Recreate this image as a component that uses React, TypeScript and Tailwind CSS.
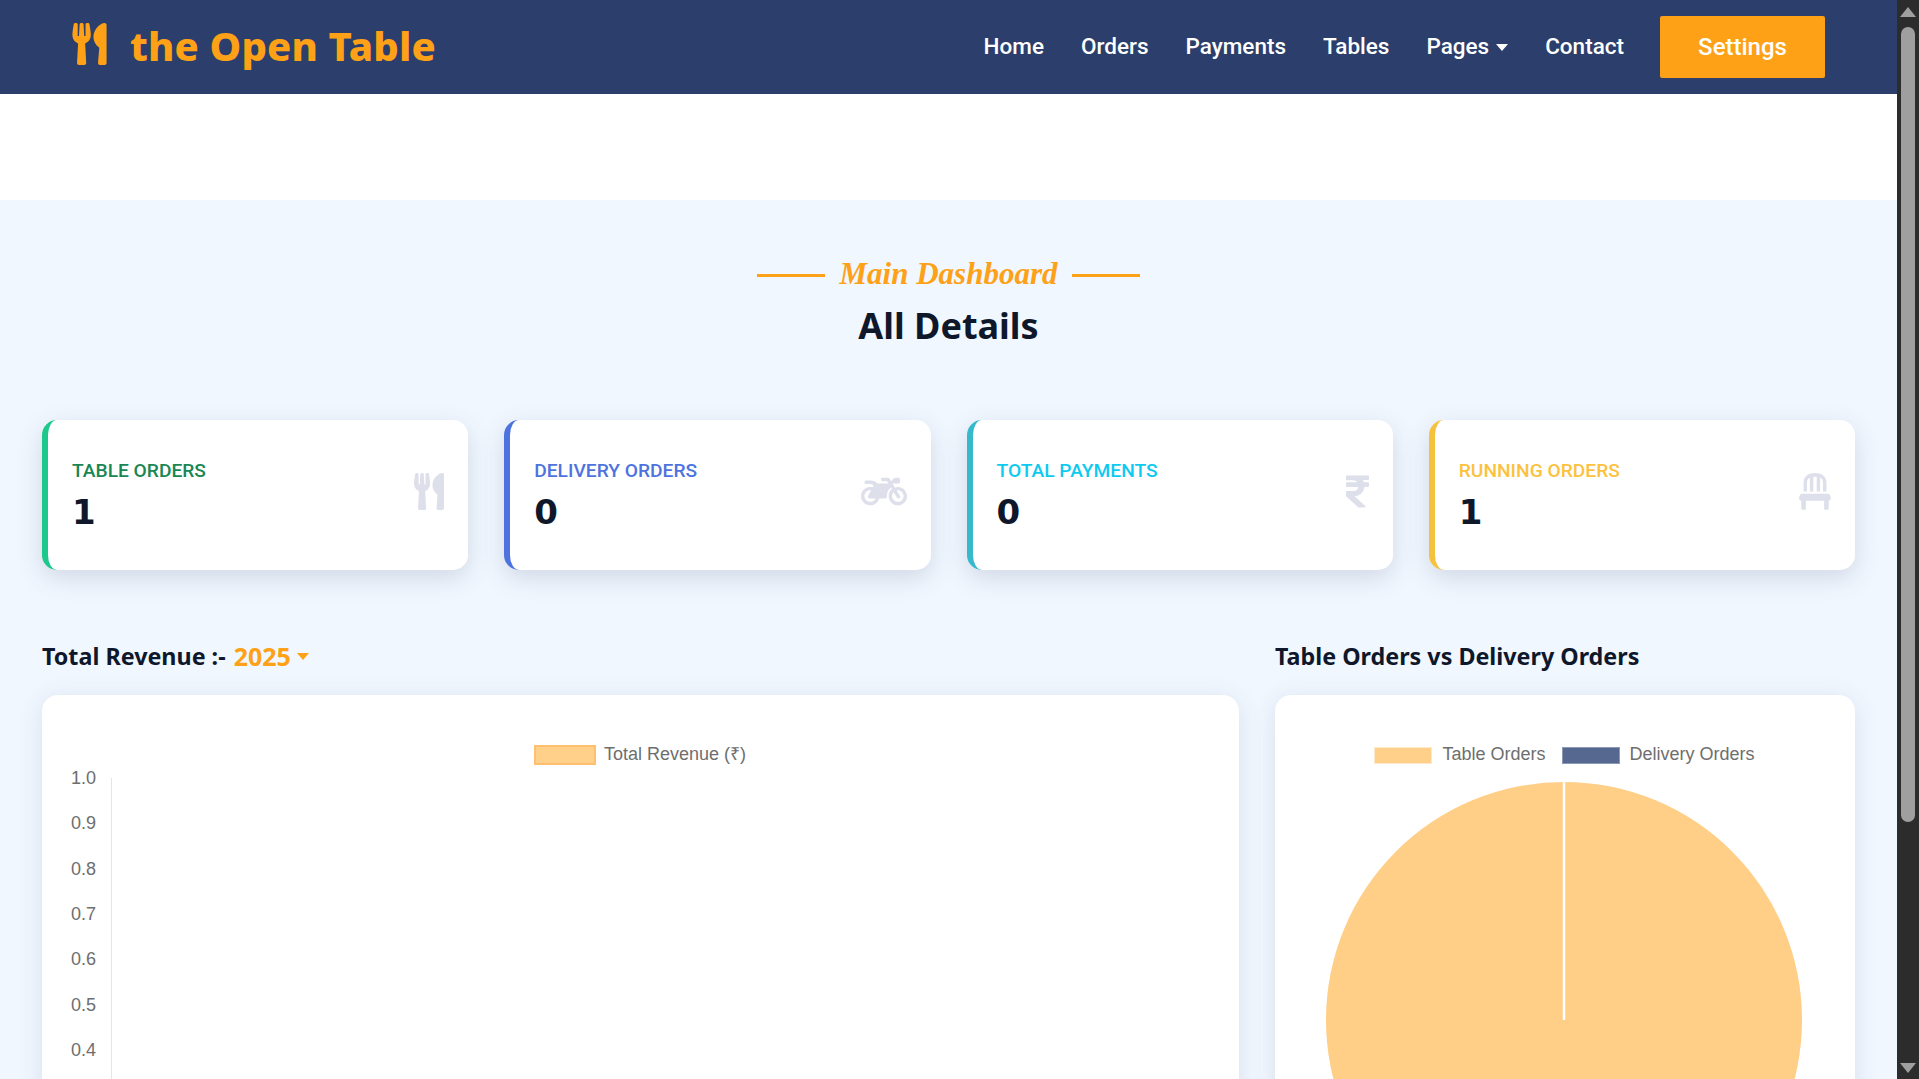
import React from 'react';
import { FaUtensils, FaMotorcycle, FaRupeeSign, FaChair } from 'react-icons/fa';

const navLinks = ['Home', 'Orders', 'Payments', 'Tables', 'Pages', 'Contact'];

const stats = [
    { label: 'TABLE ORDERS', value: '1', Icon: FaUtensils, iconSize: 'w-[30px]', border: 'border-[#1cc88a]', text: 'text-[#198754]' },
    { label: 'DELIVERY ORDERS', value: '0', Icon: FaMotorcycle, iconSize: 'w-[46px]', border: 'border-[#4e73df]', text: 'text-[#4e73df]' },
    { label: 'TOTAL PAYMENTS', value: '0', Icon: FaRupeeSign, iconSize: 'w-[23px]', border: 'border-[#36b9cc]', text: 'text-[#0dcaf0]' },
    { label: 'RUNNING ORDERS', value: '1', Icon: FaChair, iconSize: 'w-[32px]', border: 'border-[#f6c23e]', text: 'text-[#fcc23e]' },
];

const ticks = ['1.0', '0.9', '0.8', '0.7', '0.6', '0.5', '0.4'];

const Caret: React.FC<{ className: string }> = ({ className }) => (
    <span className={`inline-block w-0 h-0 border-x-transparent border-b-0 ${className}`} />
);

const Navbar = () => (
    <nav className="h-[94px] bg-[#2c3f6c] flex items-center justify-between pl-[72px] pr-[72px] shrink-0">
        <div className="flex items-center gap-[23px] text-[#fea116]">
            <FaUtensils className="w-[35px] h-[42px] -mt-[6px]" />
            <span className="font-['Noto_Sans',sans-serif] font-extrabold text-[40px] leading-none tracking-[0.15px] -mt-[2px]">the Open Table</span>
        </div>
        <div className="flex items-center font-['Roboto',sans-serif] font-medium text-[22.5px] text-white">
            <div className="flex items-center gap-[37px] mr-[36px]">
                {navLinks.map(link => (
                    <a key={link} className="flex items-center">
                        {link}
                        {link === 'Pages' && <Caret className="ml-[7px] border-x-[6px] border-t-[7px] border-t-white" />}
                    </a>
                ))}
            </div>
            <button className="w-[165px] h-[62px] bg-[#fea116] rounded-[2px] text-white text-[24px]">Settings</button>
        </div>
    </nav>
);

const StatCard: React.FC<typeof stats[number]> = ({ label, value, Icon, iconSize, border, text }) => (
    <div className={`h-[150px] bg-white rounded-[15px] border-l-[6px] ${border} flex items-center justify-between pl-[24px] pr-[24px] shadow-[0_8px_24px_rgba(58,69,100,0.17)]`}>
        <div className="mt-[3px]">
            <div className={`font-['Roboto',sans-serif] font-medium text-[19.2px] leading-[22px] ${text}`}>{label}</div>
            <div className="font-['DejaVu_Sans',sans-serif] font-bold text-[34px] leading-[44px] mt-[8px] text-[#0f172b]">{value}</div>
        </div>
        <Icon className={`h-[37px] ${iconSize} -mt-[7px] text-[#dddfeb]`} />
    </div>
);

const SectionTitle: React.FC<{ children: React.ReactNode }> = ({ children }) => (
    <h3 className="font-['Noto_Sans',sans-serif] font-bold text-[23.3px] leading-[32px] text-[#0f172b] flex items-center">{children}</h3>
);

const RevenueChart = () => (
    <div className="bg-white rounded-[16px] shadow-[0_4px_24px_rgba(58,69,100,0.12)] h-[500px] pt-[50px] font-['Liberation_Sans',sans-serif] text-[18px] text-[#6e6e6e]">
        <div className="flex items-center justify-center gap-[8px] h-[20px] -ml-[1px]">
            <span className="w-[62px] h-[20px] bg-[#ffd08a] border-2 border-[#fec070]" />
            <span className="-mt-[2px]">Total Revenue (₹)</span>
        </div>
        <div className="flex -mt-[9px] ml-[29px]">
            <div className="w-[25px] text-right">
                {ticks.map(t => <div key={t} className="h-[45.33px] leading-[45.33px]">{t}</div>)}
            </div>
            <div className="ml-[15px] mt-[22px] w-px h-[320px] bg-[#e5e5e5]" />
        </div>
    </div>
);

const PieChart = () => (
    <div className="bg-white rounded-[16px] shadow-[0_4px_24px_rgba(58,69,100,0.12)] h-[500px] pt-[50px] font-['Liberation_Sans',sans-serif] text-[18px] text-[#6e6e6e]">
        <div className="flex items-center justify-center h-[20px] -ml-[1px]">
            <span className="w-[58px] h-[17px] bg-[#ffd08a] border border-[#ffe9c9] mr-[10px]" />
            <span className="mr-[16px] -mt-[2px]">Table Orders</span>
            <span className="w-[58px] h-[17px] bg-[#56688f] border border-[#8c9ab5] mr-[10px]" />
            <span className="-mt-[2px]">Delivery Orders</span>
        </div>
        <svg viewBox="0 0 476 476" className="w-[476px] h-[476px] mt-[17px] mx-auto block -translate-x-[1px]">
            <circle cx="238" cy="238" r="238" fill="#ffce87" />
            <line x1="238" y1="0" x2="238" y2="238" stroke="#fff" strokeWidth="2.5" />
        </svg>
    </div>
);

const Scrollbar = () => (
    <aside className="w-[22px] shrink-0 bg-[#2c2c2c] flex flex-col items-center">
        <svg viewBox="0 0 16 10" className="w-[16px] h-[10px] mt-[7px] shrink-0"><path d="M8 0L16 10H0Z" fill="#9f9f9f" /></svg>
        <div className="w-[14px] h-[795px] mt-[10px] rounded-full bg-[#9f9f9f] shrink-0" />
        <svg viewBox="0 0 16 10" className="w-[16px] h-[10px] mt-[241px] shrink-0"><path d="M0 0H16L8 10Z" fill="#9f9f9f" /></svg>
    </aside>
);

export default function App() {
    return (
        <div className="flex h-screen overflow-hidden bg-white">
            <main className="flex-1 min-w-0 overflow-hidden flex flex-col">
                <Navbar />
                <div className="h-[106px] bg-white shrink-0" />
                <section className="flex-1 bg-[#f0f7ff] px-[42px] pt-[52px]">
                    <div className="flex flex-col items-center">
                        <div className="flex items-center h-[44px] gap-[12px]">
                            <span className="w-[68px] h-[3px] mt-[2px] bg-[#fea116]" />
                            <span className="font-['Liberation_Serif',serif] italic font-bold text-[31px] leading-[44px] text-[#fea116] w-[223px] text-center whitespace-nowrap">Main Dashboard</span>
                            <span className="w-[68px] h-[3px] mt-[2px] bg-[#fea116]" />
                        </div>
                        <h2 className="font-['Noto_Sans',sans-serif] font-bold text-[36px] leading-[44px] mt-[8px] text-[#0f172b]">All Details</h2>
                    </div>
                    <div className="grid grid-cols-4 gap-[36px] mt-[72px]">
                        {stats.map(s => <StatCard key={s.label} {...s} />)}
                    </div>
                    <div className="grid grid-cols-[1197px_580px] gap-[36px] mt-[70px]">
                        <div>
                            <SectionTitle>
                                Total Revenue :-<span className="text-[#fea116] text-[25px] ml-[8px]">2025</span>
                                <Caret className="ml-[6px] border-x-[6.5px] border-t-[7px] border-t-[#fea116]" />
                            </SectionTitle>
                            <div className="mt-[23px]"><RevenueChart /></div>
                        </div>
                        <div>
                            <SectionTitle>Table Orders vs Delivery Orders</SectionTitle>
                            <div className="mt-[23px]"><PieChart /></div>
                        </div>
                    </div>
                </section>
            </main>
            <Scrollbar />
        </div>
    );
}
